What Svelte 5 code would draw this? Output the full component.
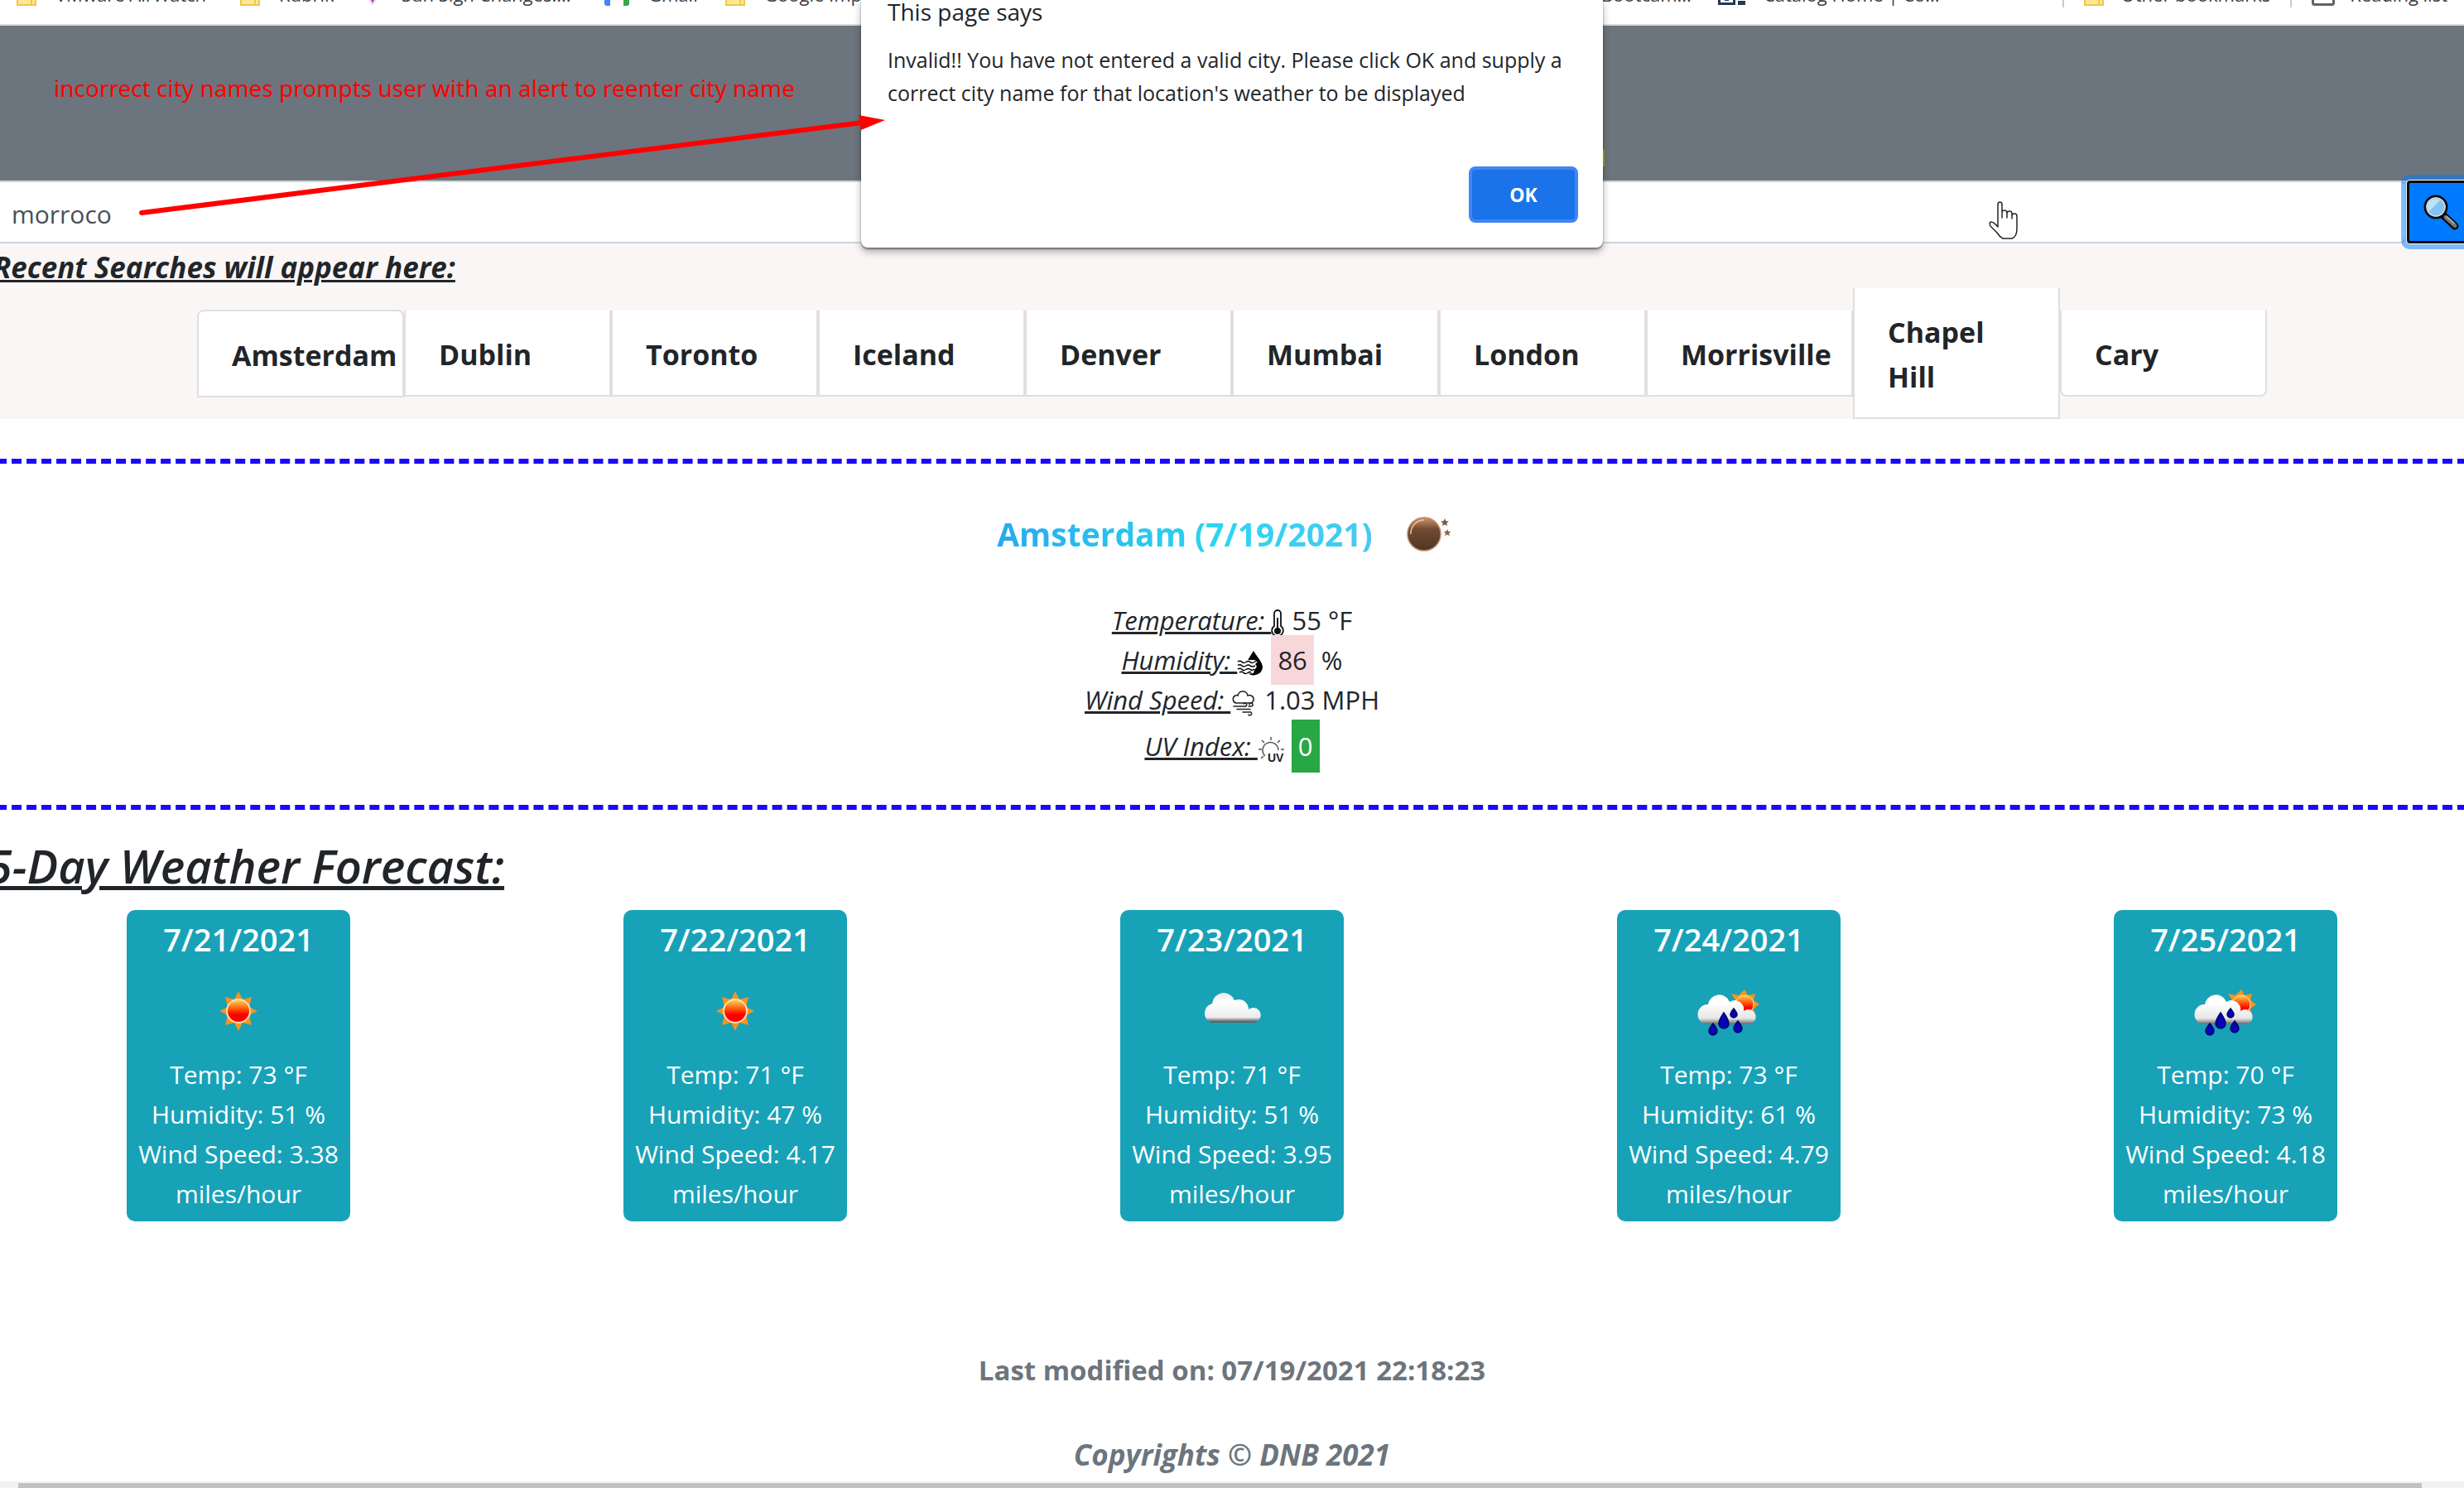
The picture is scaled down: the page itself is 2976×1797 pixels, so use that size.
<script>
  const leftBookmarks = [
    { icon: 'folder', label: 'VMware AirWatch' },
    { icon: 'folder', label: 'Rubrik' },
    { icon: 'gem', label: 'Sun Sign Changes....' },
    { icon: 'mail', label: 'Gmail' },
    { icon: 'folder', label: 'Google Important' },
  ];
  const cities = ['Amsterdam', 'Dublin', 'Toronto', 'Iceland', 'Denver', 'Mumbai', 'London', 'Morrisville', 'Chapel Hill', 'Cary'];
  const forecast = [
    { date: '7/21/2021', icon: 'sun', temp: 73, humidity: 51, wind: '3.38' },
    { date: '7/22/2021', icon: 'sun', temp: 71, humidity: 47, wind: '4.17' },
    { date: '7/23/2021', icon: 'cloud', temp: 71, humidity: 51, wind: '3.95' },
    { date: '7/24/2021', icon: 'rain', temp: 73, humidity: 61, wind: '4.79' },
    { date: '7/25/2021', icon: 'rain', temp: 70, humidity: 73, wind: '4.18' },
  ];
  let query = $state('morroco');
</script>

{#snippet bookmarkIcon(name)}
  {#if name === 'folder'}
    <svg width="24" height="26" viewBox="0 0 24 26" aria-hidden="true">
      <path d="M1 1h22v24H1z" fill="#ffe794" stroke="#ecc94b" stroke-width="2" />
      <path d="M18 2v22" stroke="#ecc94b" stroke-width="2" />
    </svg>
  {:else if name === 'gem'}
    <svg width="24" height="28" viewBox="0 0 24 28" aria-hidden="true">
      <path d="M3 14h18l-9 14z" fill="#f3d5ea" />
      <path d="M7 14h10l-5 11z" fill="#c45fc4" />
      <path d="M9 18h6l-3 5z" fill="#8e1d9c" />
    </svg>
  {:else if name === 'mail'}
    <svg width="30" height="24" viewBox="0 0 30 24" aria-hidden="true">
      <path d="M0 4h7v20H3q-3 0-3-3z" fill="#4285f4" />
      <path d="M23 4h7v17q0 3-3 3h-4z" fill="#34a853" />
      <path d="M3 2l12 7 12-7v4l-12 7L3 6z" fill="#ea4335" />
    </svg>
  {/if}
{/snippet}

<div class="page">
  <header class="bookmarks">
    <nav class="group left">
      {#each leftBookmarks as b}
        <a class="bookmark" href="#bookmark">{@render bookmarkIcon(b.icon)}<span>{b.label}</span></a>
      {/each}
    </nav>
    <nav class="group right">
      <a class="bookmark" href="#bookmark"><span>Coding Bootcam...</span></a>
      <a class="bookmark catalog" href="#bookmark">
        <svg width="34" height="26" viewBox="0 0 34 26" aria-hidden="true">
          <path d="M1.500 2h18v21.500h-18z" fill="none" stroke="#1f3a54" stroke-width="3" />
          <path d="M8 14h5v6H8zM24 20h9v5h-9z" fill="#1f3a54" />
        </svg>
        <span>Catalog Home | Co...</span>
      </a>
      <a class="bookmark other" href="#bookmark">{@render bookmarkIcon('folder')}<span>Other bookmarks</span></a>
      <a class="bookmark reading" href="#bookmark">
        <svg width="28" height="28" viewBox="0 0 28 28" aria-hidden="true">
          <rect x="1.500" y="1.500" width="25" height="25" rx="2" fill="none" stroke="#5f6368" stroke-width="3" />
          <path d="M6 19h4M12 19h9" stroke="#5f6368" stroke-width="3" />
        </svg>
        <span>Reading list</span>
      </a>
    </nav>
  </header>

  <section class="hero">
    <p class="note">incorrect city names prompts user with an alert to reenter city name</p>
  </section>

  <form class="search" onsubmit={(e) => e.preventDefault()}>
    <input type="text" aria-label="City name" bind:value={query} />
    <button type="submit" aria-label="Search">
      <svg width="44" height="44" viewBox="0 0 44 44" aria-hidden="true">
        <path d="M24 25l15 14" stroke="#0b0b0b" stroke-width="9" stroke-linecap="round" />
        <path d="M28 28.500l11 10" stroke="#767676" stroke-width="5" stroke-linecap="round" />
        <path d="M29 27.500l9 8" stroke="#b9c1c4" stroke-width="1.500" stroke-linecap="round" />
        <circle cx="16" cy="16" r="13" fill="#83c3f1" stroke="#0b0b0b" stroke-width="3" />
        <circle cx="16" cy="16" r="11" fill="none" stroke="#d7dadb" stroke-width="1.500" />
        <path d="M8 21L21 8q-4-3-9-1-6 3-6 9 0 3 2 5z" fill="#bfe2fa" />
      </svg>
    </button>
  </form>

  <section class="recent">
    <h2>Recent Searches will appear here:</h2>
    <ul>
      {#each cities as city}
        <li><button type="button">{city}</button></li>
      {/each}
    </ul>
  </section>

  <section class="current">
    <h1>
      <span>Amsterdam (7/19/2021)</span>
      <svg width="56" height="44" viewBox="0 0 56 44" role="img" aria-label="Clear night">
        <defs>
          <linearGradient id="moon" x1="0" y1="0" x2="0" y2="1">
            <stop offset="0" stop-color="#d09468" />
            <stop offset=".35" stop-color="#6f4c33" />
            <stop offset="1" stop-color="#4f3521" />
          </linearGradient>
        </defs>
        <circle cx="22" cy="22" r="20" fill="url(#moon)" stroke="#bd8a66" stroke-width="1.500" />
        <path d="M6 22A16 16 0 0 1 22 5" fill="none" stroke="#eec8a8" stroke-width="1.500" />
        <path d="M47 3l1.300 3.200 3.700.3-2.800 2.200.9 3.500-3.100-1.900-3.100 1.900.9-3.500L42 6.500l3.700-.3z" fill="#7c5438" />
        <path d="M50 16l1.200 2.800 3.300.3-2.500 2 .8 3.200-2.800-1.700-2.800 1.700.8-3.200-2.500-2 3.300-.3z" fill="#8d6244" />
      </svg>
    </h1>
    <p>
      <i>Temperature:&nbsp;</i><svg width="16" height="34" viewBox="0 0 16 34" aria-hidden="true">
        <path d="M4 20V5a4 4 0 0 1 8 0v15a6.800 6.800 0 1 1-8 0z" fill="#fff" stroke="#111" stroke-width="1.800" />
        <circle cx="8" cy="26" r="4" fill="#111" />
        <path d="M8 10v14" stroke="#111" stroke-width="2" />
      </svg>
      <span>55 °F</span>
    </p>
    <p>
      <i>Humidity:&nbsp;</i><svg width="32" height="32" viewBox="0 0 32 32" aria-hidden="true">
        <path d="M20 1C25 9 31 15 31 21a11 10.500 0 0 1-19 6C9 21 10 16 20 1z" fill="#000" />
        <path d="M0 12h21l4 2-3 3 2 3-3 4-1 4-10 1-10-2z" fill="#fff" />
        <path d="M1 14q3-1.500 5 .5t5 0 5 0 5 0 3-.5M1 18.500q3-1.500 5 .5t5 0 5 0 6 0M1 23q3-1.500 5 .5t5 0 5 0 5-.5M3 27q3-1.500 5 .5t5 0 4 0" fill="none" stroke="#000" stroke-width="1.500" />
      </svg>
      <span class="high">86</span> <span>%</span>
    </p>
    <p>
      <i>Wind Speed:&nbsp;</i><svg width="32" height="32" viewBox="0 0 32 32" aria-hidden="true" fill="none" stroke="#222" stroke-width="1.500" stroke-linecap="round">
        <path d="M7 16a4.800 4.800 0 0 1-1-9q2-1 3 0 1-5 6-5 5 0 6 5 2-1 4 0a4.800 4.800 0 0 1 0 9H6" />
        <path d="M4 20h13a2 2 0 1 0-1-3M22 20h3a2 2 0 1 0-2-2M8 23.500h16M15 27h8a2 2 0 1 1-1 3" />
      </svg>
      <span>1.03 MPH</span>
    </p>
    <p class="uv">
      <i>UV Index:&nbsp;</i><svg width="32" height="32" viewBox="0 0 32 32" aria-hidden="true" fill="none" stroke="#555" stroke-width="1.500">
        <path d="M9 24A9.500 9.500 0 1 1 25 17" />
        <path d="M16 1v4M5 5l3 3M27 5l-3 3M1 16h4M28 16h4M4 27l3-3" />
        <text class="uv-mark" x="12" y="31">UV</text>
      </svg>
      <span class="low">0</span>
    </p>
  </section>

  <section class="forecast">
    <h2>5-Day Weather Forecast:</h2>
    <div class="days">
      {#each forecast as day, i}
        <article>
          <h3>{day.date}</h3>
          {#if day.icon === 'sun'}
            <svg width="100" height="100" viewBox="0 0 100 100" role="img" aria-label="Sunny">
              <defs>
                <linearGradient id="sun{i}" x1="0" y1="0" x2="0" y2="1">
                  <stop offset="0" stop-color="#ffd75e" />
                  <stop offset=".45" stop-color="#ff4a00" />
                  <stop offset=".65" stop-color="#f00" />
                </linearGradient>
              </defs>
              <path d="M50 26l5 10 11-3-3 12 10 5-10 5 3 12-11-3-5 10-5-10-11 3 3-12-10-5 10-5-3-12 11 3z" fill="#f7941d" />
              <circle cx="50" cy="50" r="14" fill="url(#sun{i})" stroke="#ffdfb0" stroke-width="2" />
            </svg>
          {:else if day.icon === 'cloud'}
            <svg width="100" height="100" viewBox="0 0 100 100" role="img" aria-label="Cloudy">
              <defs>
                <linearGradient id="cloud" x1="0" y1="0" x2="0" y2="1">
                  <stop offset="0" stop-color="#e8e8e8" />
                  <stop offset=".3" stop-color="#fff" />
                  <stop offset=".82" stop-color="#ededed" />
                  <stop offset=".94" stop-color="#777" />
                  <stop offset="1" stop-color="#555" />
                </linearGradient>
              </defs>
              <path d="M25 64a12 12 0 0 1 1-23 14 14 0 0 1 27-4 12 12 0 0 1 17 11 9 9 0 1 1 6 16z" fill="url(#cloud)" />
            </svg>
          {:else}
            <svg width="100" height="100" viewBox="-2 0 100 100" role="img" aria-label="Rain with sun">
              <defs>
                <linearGradient id="raincloud{i}" x1="0" y1="0" x2="0" y2="1">
                  <stop offset=".3" stop-color="#fff" />
                  <stop offset=".8" stop-color="#e6e6e6" />
                  <stop offset="1" stop-color="#666" />
                </linearGradient>
                <linearGradient id="rainsun{i}" x1="0" y1="0" x2="0" y2="1">
                  <stop offset="0" stop-color="#ffd24a" />
                  <stop offset=".5" stop-color="#ff3c00" />
                  <stop offset=".7" stop-color="#f00" />
                </linearGradient>
              </defs>
              <path d="M67 24l4 7 9-2-2 8 7 5-7 5 2 8-9-2-4 7-4-7-9 2 2-8-7-5 7-5-5-8 9 2z" fill="#f7941d" />
              <circle cx="67" cy="42" r="11" fill="url(#rainsun{i})" stroke="#ffdfb0" stroke-width="1" />
              <path d="M22 66a12 12 0 0 1 1-24 13.500 13.500 0 0 1 26-3 11 11 0 0 1 17 11 9 9 0 1 1 5 16z" fill="url(#raincloud{i})" />
              <g fill="#0505b4" stroke="#03036b" stroke-width="1.500">
                <path d="M42 52q6 9 6 13a6 6 0 0 1-12 0q0-4 6-13z" />
                <path d="M29 65q5 6 5 9a5 5 0 0 1-10 0q0-3 5-9z" />
                <path d="M59 62q5 6 5 9a5 5 0 0 1-10 0q0-3 5-9z" />
                <path d="M54 47q4 5 4 7a4 4 0 0 1-8 0q0-2 4-7z" />
              </g>
            </svg>
          {/if}
          <p>Temp: {day.temp} °F</p>
          <p>Humidity: {day.humidity} %</p>
          <p>Wind Speed: {day.wind} miles/hour</p>
        </article>
      {/each}
    </div>
  </section>

  <footer>
    <p>Last modified on: 07/19/2021 22:18:23</p>
    <p class="copyright"><em>Copyrights © DNB 2021</em></p>
  </footer>

  <div class="scroll-track"><div class="scroll-thumb"></div></div>

  <div class="dialog" role="alertdialog" aria-labelledby="alert-title" aria-describedby="alert-text">
    <h2 id="alert-title">This page says</h2>
    <p id="alert-text">Invalid!! You have not entered a valid city. Please click OK and supply a correct city name for that location's weather to be displayed</p>
    <button type="button">OK</button>
    <span class="sliver"></span>
  </div>

  <svg class="arrow" width="1100" height="300" viewBox="0 0 1100 300" aria-hidden="true">
    <path d="M171 257L1042 148" stroke="#f00" stroke-width="6" stroke-linecap="round" />
    <path d="M1069 145l-32-6 3 18z" fill="#f00" />
  </svg>

  <svg class="pointer" width="36" height="48" viewBox="0 0 36 48" aria-hidden="true">
    <path d="M11 31V4q0-3 2.500-3T16 4v16-6q0-3 3-3t3 3v6-5q0-3 3-3t3 3v6-3q0-3 3-3t3 3v15q0 10-6 12H17q-4-2-7-7L2 30q-2-5 1-5t8 6z" fill="#fff" stroke="#23252e" stroke-width="1.500" stroke-linejoin="round" />
  </svg>
</div>

<style>
  :global(body) {
    margin: 0;
    background: #fff;
  }
  .page {
    position: relative;
    display: flex;
    flex-direction: column;
    min-height: 100vh;
    overflow: hidden;
    color: #212529;
    font: 30px/48px 'Open Sans', 'Noto Sans', sans-serif;
  }
  h1, h2, h3, p, ul {
    margin: 0;
    padding: 0;
    font-weight: 400;
  }
  button, input {
    font: inherit;
    color: inherit;
    box-sizing: border-box;
  }
  .bookmarks {
    display: flex;
    justify-content: space-between;
    align-items: flex-end;
    height: 29px;
    overflow: hidden;
    border-bottom: 2px solid #d9dce0;
    padding: 0 20px;
    font-size: 22px;
    line-height: 32px;
  }
  .group {
    display: flex;
    padding-bottom: 20px;
  }
  .left {
    display: grid;
    grid-template-columns: 270px 148px 292px 146px 260px;
  }
  .bookmark {
    display: flex;
    align-items: flex-end;
    gap: 21px;
    color: #3c4043;
    text-decoration: none;
    white-space: nowrap;
  }
  .bookmark svg {
    margin-bottom: 2px;
  }
  .left .bookmark {
    gap: 23px;
  }
  .catalog {
    margin-left: 32px;
  }
  .other, .reading {
    border-left: 2px solid #c8cacd;
    margin-left: 24px;
    padding-left: 24px;
  }
  .catalog + .other {
    margin-left: 148px;
  }
  .reading {
    gap: 18px;
  }
  .hero {
    box-sizing: border-box;
    min-height: 187px;
    padding: 51px 65px;
    background: #6c757d;
  }
  .note {
    color: #f00;
    font-family: 'Noto Sans', sans-serif;
    font-size: 28px;
  }
  .search {
    display: flex;
    height: 76px;
    margin-right: -13px;
    background: #faf6f5;
  }
  .search input {
    flex: 1;
    border: 2px solid #ced4da;
    border-left: 0;
    border-radius: 0 8px 8px 0;
    padding: 5px 14px 0;
    background: #fff;
    color: #495057;
  }
  .search button {
    display: grid;
    place-items: center;
    width: 82px;
    border: 3px solid #0a0a0a;
    border-radius: 4px;
    background: #007bff;
    padding: 0;
    z-index: 1;
    box-shadow: 0 0 0 1px #fff, 0 0 0 7px rgba(0, 123, 255, 0.5);
  }
  .recent {
    background: #faf6f5;
  }
  .recent h2 {
    margin-left: -8px;
    padding-top: 4px;
    font-size: 35px;
    line-height: 50px;
    font-weight: 700;
    font-style: italic;
    text-decoration: underline;
    text-decoration-thickness: 3px;
  }
  .recent ul {
    display: flex;
    justify-content: center;
    align-items: center;
    list-style: none;
  }
  .recent li {
    width: 250px;
    min-width: 0;
  }
  .recent button {
    display: block;
    width: 100%;
    border: 2px solid #dfdfdf;
    border-top: 0;
    padding: 26px 40px 22px;
    background: #fff;
    font-size: 34px;
    font-weight: 700;
    line-height: 54px;
    text-align: left;
  }
  .recent li:first-child button {
    border-top: 2px solid #dfdfdf;
    border-radius: 8px 8px 0 0;
  }
  .recent li:last-child button {
    border-radius: 0 0 8px 8px;
  }
  .current {
    display: flex;
    flex-direction: column;
    align-items: center;
    margin: 48px -22px 0;
    border: dashed #1b08ff;
    border-width: 6px 0;
    padding: 55px 0 40px;
    font-size: 31px;
  }
  .current h1 {
    display: flex;
    align-items: center;
    gap: 40px;
    margin-bottom: 50px;
    padding-right: 18px;
    font-size: 39px;
    font-weight: 700;
    line-height: 60px;
  }
  .current h1 span {
    background: linear-gradient(90deg, #26aaef, #2cd6ef 60%, #48c8f5);
    background-clip: text;
    color: transparent;
  }
  .current p {
    display: flex;
    align-items: center;
    height: 48px;
  }
  .current i {
    text-decoration: underline;
    text-decoration-thickness: 3px;
  }
  .current p svg {
    margin-right: 9px;
    margin-top: 8px;
  }
  .current .uv {
    height: 63px;
  }
  .uv-mark {
    fill: #222;
    stroke: none;
    font: 700 14px 'Liberation Sans', sans-serif;
  }
  .high, .low {
    padding: 6px 8px;
  }
  .high {
    margin-right: 9px;
    background: #f8d7da;
  }
  .low {
    padding: 8px;
    background: #28a745;
    color: #fff;
  }
  .forecast h2 {
    margin: 33px 0 20px -16px;
    font-size: 56px;
    line-height: 68px;
    font-weight: 600;
    font-style: italic;
    text-decoration: underline;
    text-decoration-thickness: 5px;
  }
  .days {
    display: flex;
    justify-content: space-around;
    margin: 0 -12px;
  }
  article {
    display: flex;
    flex-direction: column;
    align-items: center;
    box-sizing: border-box;
    width: 270px;
    border-radius: 10px;
    padding: 11px 8px 9px;
    background: #17a2b8;
    color: #fff;
    text-align: center;
  }
  h3 {
    font-size: 38px;
    font-weight: 600;
  }
  article svg {
    margin: 13px 0 3px;
  }
  footer {
    padding: 153px 0 5px;
    color: #6c757d;
    text-align: center;
    font-size: 33px;
    line-height: 54px;
  }
  footer p {
    font-weight: 700;
  }
  footer .copyright {
    margin-top: 48px;
    font-size: 35px;
  }
  .scroll-track {
    margin-top: auto;
    border-top: 2px solid #f1f1f1;
    padding: 0 51px 0 22px;
    background: #f1f1f1;
  }
  .scroll-thumb {
    height: 6px;
    background: #c1c1c1;
  }
  .dialog {
    position: absolute;
    top: 0;
    left: 50%;
    transform: translateX(-50%);
    box-sizing: border-box;
    display: flex;
    flex-direction: column;
    width: 896px;
    padding: 0 30px 30px 32px;
    border-radius: 0 0 8px 8px;
    background: #fff;
    box-shadow: 0 2px 2px rgba(0, 0, 0, 0.4), 0 5px 10px rgba(0, 0, 0, 0.3);
    z-index: 2;
  }
  .dialog h2 {
    font-size: 28px;
    line-height: 28px;
  }
  .dialog p {
    margin: 24px 0 69px;
    font-size: 25px;
    line-height: 40px;
  }
  .dialog button {
    align-self: flex-end;
    width: 132px;
    height: 68px;
    border: 4px solid #4285f4;
    border-radius: 8px;
    background: #1a73e8;
    color: #fff;
    font-size: 23px;
    font-weight: 700;
    line-height: 32px;
  }
  .sliver {
    position: absolute;
    right: -2px;
    top: 181px;
    width: 2px;
    height: 20px;
    background: #7c9a0c;
  }
  .arrow {
    position: absolute;
    left: 0;
    top: 0;
    z-index: 3;
    pointer-events: none;
  }
  .pointer {
    position: absolute;
    right: 538px;
    top: 243px;
    z-index: 3;
  }
</style>
